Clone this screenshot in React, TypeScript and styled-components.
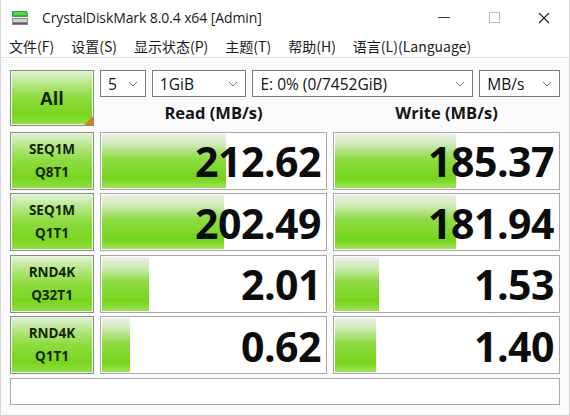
import React from 'react'
import styled, { createGlobalStyle } from 'styled-components'

const GlobalStyle = createGlobalStyle`
  html, body {
    margin: 0;
    padding: 0;
    background: #ffffff;
  }
  body {
    font-family: 'Noto Sans', 'Noto Sans CJK SC', sans-serif;
    color: #111;
  }
`

const Window = styled.div`
  width: 570px;
  height: 416px;
  box-sizing: border-box;
  background: #fbfbfb;
  border-left: 1px solid #d6d6d6;
  border-right: 1px solid #d6d6d6;
  border-bottom: 1px solid #d0d0d0;
  display: flex;
  flex-direction: column;
  overflow: hidden;
`

const TitleBar = styled.div`
  height: 35px;
  display: flex;
  align-items: center;
  background: #ffffff;
  padding-left: 10px;
`

const TitleText = styled.div`
  margin-left: 13px;
  font-family: 'Open Sans', 'Noto Sans', sans-serif;
  font-size: 14px;
  color: #1a1a1a;
  letter-spacing: -0.1px;
  flex: 1;
`

const Controls = styled.div`
  display: flex;
  height: 100%;
`

const ControlButton = styled.div`
  width: 50px;
  height: 100%;
  display: flex;
  align-items: center;
  justify-content: center;
`

const MenuBar = styled.div`
  height: 22px;
  display: flex;
  align-items: center;
  background: #ffffff;
  padding-left: 8px;
  border-bottom: 1px solid #e2e2e2;
`

const MenuItem = styled.div`
  margin-right: 17px;
  font-size: 14px;
  color: #1a1a1a;
  font-family: 'Noto Sans CJK SC', 'Noto Sans', sans-serif;
`

const Body = styled.div`
  flex: 1;
  padding: 12px 9px 0 9px;
  display: grid;
  grid-template-columns: 84px 227px 227px;
  grid-template-rows: 58px repeat(4, 58px) 27px;
  column-gap: 6px;
  row-gap: 3.5px;
`

const GreenButton = styled.div<{ $big?: boolean }>`
  position: relative;
  box-sizing: border-box;
  border: 1px solid #8c8c8c;
  box-shadow: inset 0 0 0 1px #e8f6dc;
  background: linear-gradient(
    to bottom,
    #e4f2d8 0%,
    #b8e88c 22%,
    #8edc42 48%,
    #7ad51e 80%,
    #92de48 100%
  );
  display: flex;
  flex-direction: column;
  align-items: center;
  justify-content: center;
  font-family: 'Open Sans', 'Noto Sans', sans-serif;
  font-weight: 700;
  color: #132500;
  font-size: ${(p) => (p.$big ? '18px' : '13.5px')};
  line-height: ${(p) => (p.$big ? '20px' : '23px')};
  margin-bottom: ${(p) => (p.$big ? '2px' : '0')};
`

const Corner = styled.div`
  position: absolute;
  right: 0;
  bottom: 0;
  width: 0;
  height: 0;
  border-left: 9px solid transparent;
  border-bottom: 9px solid #e07a1c;
`

const TopArea = styled.div`
  grid-column: 2 / span 2;
  display: flex;
  flex-direction: column;
  padding-bottom: 2px;
`

const SelectRow = styled.div`
  display: flex;
  gap: 6px;
  height: 27px;
`

const Select = styled.div<{ $w: number }>`
  width: ${(p) => p.$w}px;
  box-sizing: border-box;
  border: 1px solid #7a7a7a;
  background: #ffffff;
  display: flex;
  align-items: center;
  justify-content: space-between;
  padding: 0 7px 0 7px;
  font-family: 'Open Sans', 'Noto Sans', sans-serif;
  font-size: 15.5px;
  color: #111;
`

const Headers = styled.div`
  flex: 1;
  display: grid;
  grid-template-columns: 227px 227px;
  column-gap: 6px;
  align-items: center;
`

const Header = styled.div`
  text-align: center;
  font-family: 'Open Sans', 'Noto Sans', sans-serif;
  font-weight: 700;
  font-size: 16.5px;
  color: #151515;
  padding-top: 1px;
`

const Cell = styled.div`
  position: relative;
  box-sizing: border-box;
  border: 1px solid #a8a8a8;
  background: #ffffff;
  display: flex;
  align-items: center;
  justify-content: flex-end;
  padding-right: 5px;
`

const Bar = styled.div`
  position: absolute;
  left: 1px;
  top: 1px;
  bottom: 1px;
  background: linear-gradient(
    to bottom,
    #eef0ec 0%,
    #cdeab2 20%,
    #8fdc46 45%,
    #76d51a 82%,
    #9ce258 100%
  );
`

const Value = styled.div`
  position: relative;
  font-family: 'Open Sans', 'Noto Sans', sans-serif;
  font-weight: 700;
  font-size: 41px;
  letter-spacing: -0.5px;
  color: #0c0c0c;
  line-height: 1;
  padding-top: 2px;
`

const StatusBar = styled.div`
  grid-column: 1 / span 3;
  box-sizing: border-box;
  border: 1px solid #a8a8a8;
  background: #ffffff;
`

const Chevron = () => (
  <svg width="10" height="6" viewBox="0 0 10 6">
    <path d="M1 1 L5 5 L9 1" fill="none" stroke="#666" strokeWidth="0.9" />
  </svg>
)

const AppIcon = () => (
  <svg width="18" height="16" viewBox="0 0 18 16">
    <path d="M1 1 L16 1 L17 4 L17 7 L1 7 Z" fill="#2fae3a" />
    <path d="M3 2 L15 2 L16 5 L3 5 Z" fill="#5fd05a" />
    <rect x="1" y="8" width="16" height="7" fill="#8a8a8a" />
    <rect x="2" y="9" width="14" height="3" fill="#cfcfcf" />
    <rect x="2" y="13" width="14" height="1" fill="#5a5a5a" />
  </svg>
)

const rows = [
  { l1: 'SEQ1M', l2: 'Q8T1', read: '212.62', rw: 124, write: '185.37', ww: 121 },
  { l1: 'SEQ1M', l2: 'Q1T1', read: '202.49', rw: 122, write: '181.94', ww: 121 },
  { l1: 'RND4K', l2: 'Q32T1', read: '2.01', rw: 47, write: '1.53', ww: 44 },
  { l1: 'RND4K', l2: 'Q1T1', read: '0.62', rw: 28, write: '1.40', ww: 41 },
]

const App = () => {
  return (
    <>
      <GlobalStyle />
      <Window>
        <TitleBar>
          <AppIcon />
          <TitleText>CrystalDiskMark 8.0.4 x64 [Admin]</TitleText>
          <Controls>
            <ControlButton>
              <svg width="12" height="2" viewBox="0 0 12 2">
                <rect width="12" height="1" fill="#333" />
              </svg>
            </ControlButton>
            <ControlButton>
              <svg width="11" height="11" viewBox="0 0 11 11">
                <rect x="0.5" y="0.5" width="10" height="10" fill="none" stroke="#bbb" />
              </svg>
            </ControlButton>
            <ControlButton>
              <svg width="12" height="12" viewBox="0 0 12 12">
                <path d="M1 1 L11 11 M11 1 L1 11" stroke="#222" strokeWidth="1.1" />
              </svg>
            </ControlButton>
          </Controls>
        </TitleBar>
        <MenuBar>
          <MenuItem>文件(F)</MenuItem>
          <MenuItem>设置(S)</MenuItem>
          <MenuItem>显示状态(P)</MenuItem>
          <MenuItem>主题(T)</MenuItem>
          <MenuItem>帮助(H)</MenuItem>
          <MenuItem>语言(L)(Language)</MenuItem>
        </MenuBar>
        <Body>
          <GreenButton $big>
            All
            <Corner />
          </GreenButton>
          <TopArea>
            <SelectRow>
              <Select $w={46}>
                5 <Chevron />
              </Select>
              <Select $w={95}>
                1GiB <Chevron />
              </Select>
              <Select $w={222}>
                E: 0% (0/7452GiB) <Chevron />
              </Select>
              <Select $w={81}>
                MB/s <Chevron />
              </Select>
            </SelectRow>
            <Headers>
              <Header>Read (MB/s)</Header>
              <Header>Write (MB/s)</Header>
            </Headers>
          </TopArea>
          {rows.map((r, i) => (
            <React.Fragment key={i}>
              <GreenButton>
                <span>{r.l1}</span>
                <span>{r.l2}</span>
              </GreenButton>
              <Cell>
                <Bar style={{ width: r.rw }} />
                <Value>{r.read}</Value>
              </Cell>
              <Cell>
                <Bar style={{ width: r.ww }} />
                <Value>{r.write}</Value>
              </Cell>
            </React.Fragment>
          ))}
          <StatusBar />
        </Body>
      </Window>
    </>
  )
}

export default App
